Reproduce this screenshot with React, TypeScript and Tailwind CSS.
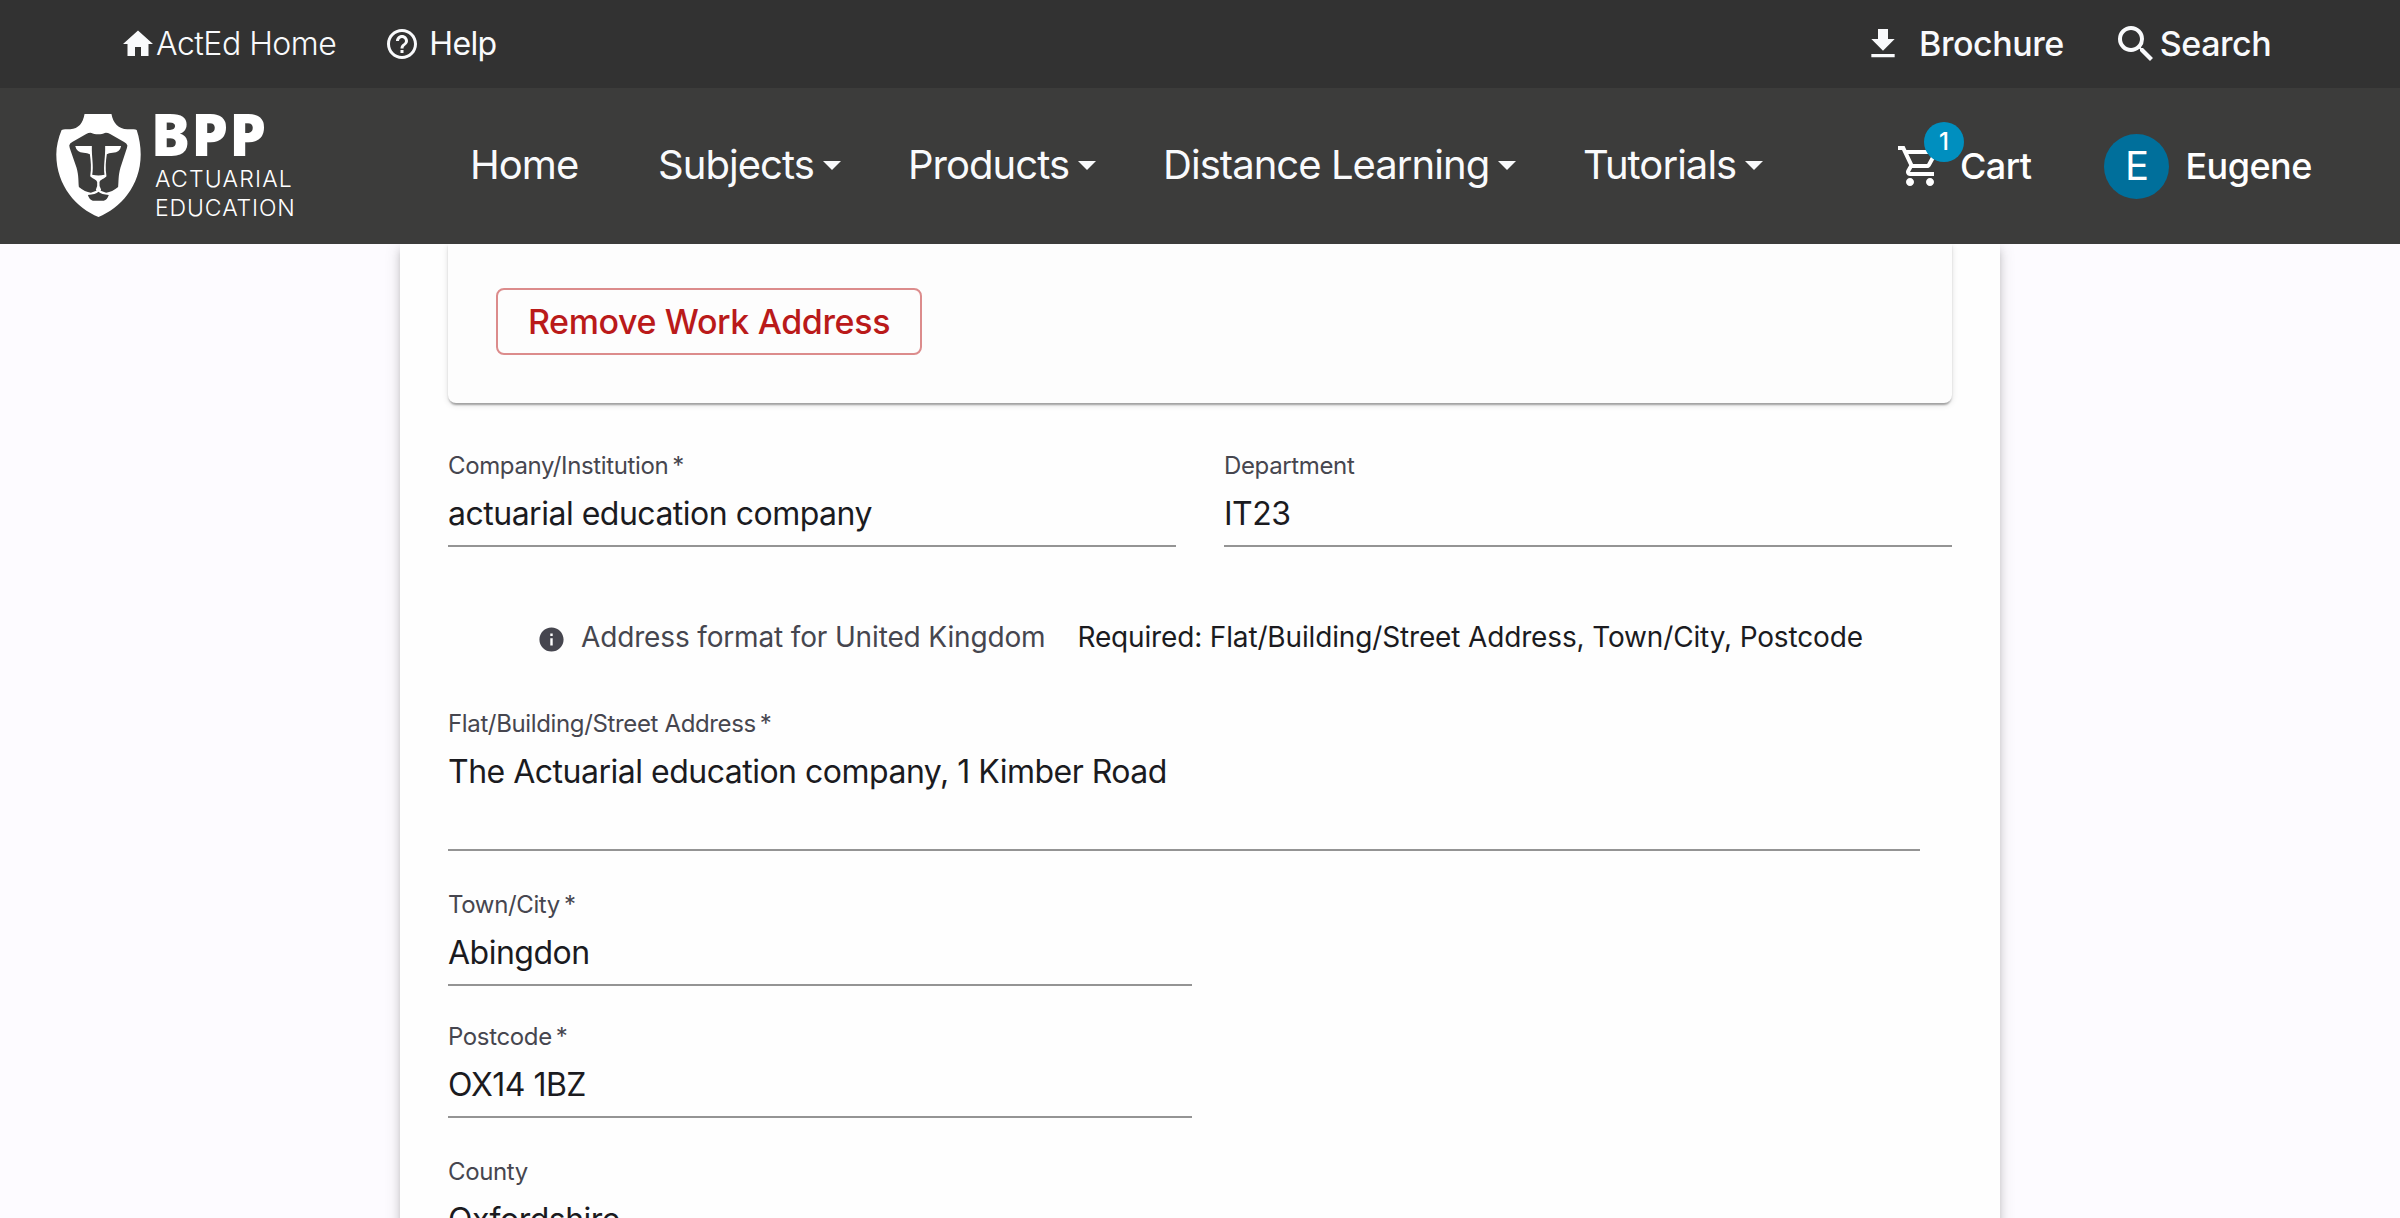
import React from "react";
import {
  MdFileDownload,
  MdHelpOutline,
  MdHome,
  MdInfo,
  MdOutlineShoppingCart,
  MdSearch,
} from "react-icons/md";

function LionShield() {
  return (
    <svg viewBox="18 18 254 310" className="-mt-px h-[103px] w-[85px]" aria-hidden="true">
      <path
        fill="#fff"
        d="M103 18H184C189 46 205 63 232 64C245 65 255 62 260 66C268 90 272 115 272 140C272 235 210 302 145 328C80 302 18 235 18 140C18 115 24 90 34 66C42 62 50 65 60 64C85 62 98 46 103 18Z"
      />
      <path
        fill="#3c3c3b"
        d="M57 113Q58 106 66 102L108 78Q116 74 124 75C132 80 156 80 164 75Q172 74 180 78L222 102Q230 106 232 113Q231 122 227 131L211 180C204 205 206 222 204 238Q186 253 168 255Q154 253 145 243Q136 253 122 255Q104 253 86 238C84 222 86 205 79 180L62 131Q58 122 57 113Z"
      />
      <path
        fill="#fff"
        d="M75 114H125C124 150 131 172 126 201Q145 205 163 201C159 172 166 150 165 114H213Q210 133 188 135Q175 136 170 139C167 160 165 180 169 205C164 212 150 214 148 223Q146 236 153 246L145 253L137 246Q143 236 141 223C139 214 126 212 120 205C124 180 122 160 119 139Q112 136 100 135Q79 133 75 114Z"
      />
      <path fill="#3c3c3b" d="M129 112H161C160 150 155 172 160 199Q145 202 130 199C134 172 129 150 129 112Z" />
      <path fill="#3c3c3b" d="M113 262Q136 260 145 252Q154 260 176 262Q171 277 161 279H128Q118 277 113 262Z" />
    </svg>
  );
}

function Caret() {
  return (
    <span className="ml-[9px] h-0 w-0 border-x-[9px] border-t-[9px] border-x-transparent border-t-[#f9fafc]" />
  );
}

function NavItem({ label, width, menu = true }: { label: string; width: string; menu?: boolean }) {
  return (
    <a className={`flex shrink-0 items-center text-[40px] tracking-[-0.95px] text-[#f9fafc] ${width}`}>
      {label}
      {menu && <Caret />}
    </a>
  );
}

function Label({ text, required }: { text: string; required?: boolean }) {
  return (
    <div className="mb-1 flex h-[25px] items-center text-[24px] leading-[25px] tracking-[-0.36px] text-[#46464f]">
      {text}
      {required && <span className="ml-1">*</span>}
    </div>
  );
}

function Field({
  label,
  value,
  required,
  className = "",
  valueClass = "h-[63px]",
}: {
  label: string;
  value: string;
  required?: boolean;
  className?: string;
  valueClass?: string;
}) {
  return (
    <div className={`shrink-0 ${className}`}>
      <Label text={label} required={required} />
      <div
        className={`border-b-2 border-[#949494] text-[32px] leading-[63px] tracking-[-0.5px] whitespace-nowrap text-[#1b1b1f] box-content ${valueClass}`}
      >
        {value}
      </div>
    </div>
  );
}

export default function App() {
  return (
    <div className="flex h-[1218px] w-[2400px] flex-col overflow-hidden bg-[#fdfbff] font-['Inter',sans-serif] leading-none whitespace-nowrap">
      <div className="flex h-[88px] shrink-0 items-center bg-[#323232] pl-[120px] text-[#f9fafc]">
        <MdHome className="size-9" />
        <span className="text-[32px] font-light tracking-[-0.5px]">ActEd Home</span>
        <MdHelpOutline className="ml-[48px] size-9" />
        <span className="ml-[9px] text-[32px] tracking-[-0.63px]">Help</span>
        <div className="ml-auto flex w-[537px] items-center text-[34px] font-medium tracking-[-0.45px]">
          <MdFileDownload className="size-10" />
          <span className="ml-4">Brochure</span>
          <MdSearch className="ml-[48px] size-12" />
          <span>Search</span>
        </div>
      </div>

      <header className="flex h-[156px] shrink-0 items-center bg-[#3c3c3b] pl-[56px] text-white">
        <LionShield />
        <div className="ml-[10px] flex w-[319px] flex-col pt-[3px] pl-1">
          <span className="-ml-[4px] font-['Open_Sans'] text-[58px] leading-[44px] font-extrabold tracking-[1.4px]">
            BPP
          </span>
          <span className="mt-[9px] text-[23px] leading-[29px] font-light tracking-[1.2px]">ACTUARIAL</span>
          <span className="text-[23px] leading-[29px] font-light tracking-[0.9px]">EDUCATION</span>
        </div>
        <nav className="-mt-[2px] flex">
          <NavItem label="Home" width="w-[188px]" menu={false} />
          <NavItem label="Subjects" width="w-[250px]" />
          <NavItem label="Products" width="w-[255px]" />
          <NavItem label="Distance Learning" width="w-[420px]" />
          <NavItem label="Tutorials" width="w-[200px]" />
        </nav>
        <div className="ml-auto flex w-[504px] items-center text-[36px] font-medium tracking-[-0.55px]">
          <div className="relative">
            <MdOutlineShoppingCart className="size-12" />
            <span className="absolute -top-5 -right-5 flex size-10 items-center justify-center rounded-full bg-[#008fbf] text-[24px] tracking-normal">
              1
            </span>
          </div>
          <span className="ml-4">Cart</span>
          <span className="ml-[73px] flex size-[65px] items-center justify-center rounded-full bg-[#006f9b] text-[40px] font-normal tracking-normal">
            E
          </span>
          <span className="ml-4">Eugene</span>
        </div>
      </header>

      <main className="flex min-h-0 grow justify-center overflow-hidden">
        <section className="flex h-[1100px] w-[1600px] shrink-0 flex-col bg-[#fefefe] px-12 shadow-[0_6px_6px_-4px_rgba(0,0,0,0.2),0_6px_8px_rgba(0,0,0,0.14),0_2px_16px_rgba(0,0,0,0.12)]">
          <div className="flex h-[159px] shrink-0 items-start rounded-b-lg bg-[#fdfdfd] pt-[44px] pl-12 shadow-[0_4px_2px_-2px_rgba(0,0,0,0.2),0_2px_2px_rgba(0,0,0,0.14),0_2px_6px_rgba(0,0,0,0.12)]">
            <button className="flex h-[67px] w-[426px] items-center justify-center rounded-lg border-2 border-[#dc8c8c] text-[34px] font-medium tracking-[-0.37px] text-[#ba1a1a]">
              Remove Work Address
            </button>
          </div>

          <div className="mt-[50px] flex shrink-0 gap-12">
            <Field label="Company/Institution" value="actuarial education company" required className="w-[728px]" />
            <Field label="Department" value="IT23" className="w-[728px]" />
          </div>

          <div className="mt-[70px] flex h-10 shrink-0 items-center pl-[89px] text-[28px] tracking-[-0.15px] text-[#46464f]">
            <MdInfo className="mt-1 size-[29px]" />
            <span className="ml-[15px]">Address format for United Kingdom</span>
            <span className="ml-[32px] tracking-[-0.15px] text-[#1b1b1f]">
              Required: Flat/Building/Street Address, Town/City, Postcode
            </span>
          </div>

          <Field
            label="Flat/Building/Street Address"
            value="The Actuarial education company, 1 Kimber Road"
            required
            className="mt-[54px] w-[1472px]"
            valueClass="h-[109px]"
          />
          <Field label="Town/City" value="Abingdon" required className="mt-[41px] w-[744px]" />
          <Field label="Postcode" value="OX14 1BZ" required className="mt-[38px] w-[744px]" />
          <Field label="County" value="Oxfordshire" className="mt-[41px] w-[744px]" />
        </section>
      </main>
    </div>
  );
}
